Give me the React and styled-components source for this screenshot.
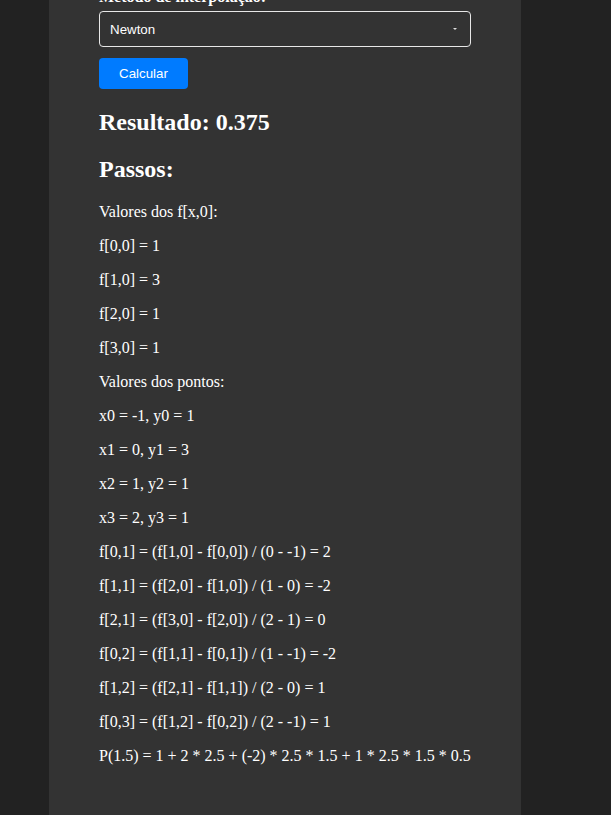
import React, { useLayoutEffect, useRef } from 'react'
import styled, { createGlobalStyle } from 'styled-components'

const GlobalStyle = createGlobalStyle`
	body {
		margin: 8px;
		background: #222;
		color: #fff;
		font-family: "Liberation Serif", "Times New Roman", serif;
	}
`

const Container = styled.div`
	width: 472px;
	box-sizing: border-box;
	margin-left: 41px;
	margin-top: -8px;
	margin-bottom: -8px;
	padding: 20px 50px 80px;
	background: #333;
`

const Title = styled.h1`
	margin: 0 0 20px;
	font-size: 28px;
`

const Label = styled.label`
	display: block;
	margin-bottom: 5px;
	font-weight: bold;
	font-size: 16px;
`

const Input = styled.input`
	display: block;
	width: 100%;
	box-sizing: border-box;
	height: 36px;
	margin-bottom: 10px;
	padding: 0 10px;
	background: #333;
	color: #fff;
	border: 1px solid #fff;
	border-radius: 4px;
	font-family: "Liberation Sans", Arial, sans-serif;
	font-size: 13.33px;
`

const SelectWrap = styled.div`
	position: relative;
	margin-bottom: 11px;
`

const Select = styled.select`
	display: block;
	width: 100%;
	height: 36px;
	box-sizing: border-box;
	padding: 0 10px;
	appearance: none;
	background: #333;
	color: #fff;
	border: 1px solid #e8e8e8;
	border-radius: 4px;
	font-family: "Liberation Sans", Arial, sans-serif;
	font-size: 13.33px;
`

const Caret = styled.span`
	position: absolute;
	right: 14px;
	top: 17px;
	width: 0;
	height: 0;
	border-left: 2.5px solid transparent;
	border-right: 2.5px solid transparent;
	border-top: 2.5px solid #ddd;
	pointer-events: none;
`

const Button = styled.button`
	display: block;
	height: 31px;
	padding: 0 20px;
	background: #007bff;
	color: #fff;
	border: none;
	border-radius: 4px;
	font-family: "Liberation Sans", Arial, sans-serif;
	font-size: 13.33px;
	cursor: pointer;
`

const Heading = styled.h2`
	font-size: 24px;
	margin: 20px 0;
`

const Step = styled.p`
	margin: 16px 0;
	font-size: 16px;
`

const steps = [
	"Valores dos f[x,0]:",
	"f[0,0] = 1",
	"f[1,0] = 3",
	"f[2,0] = 1",
	"f[3,0] = 1",
	"Valores dos pontos:",
	"x0 = -1, y0 = 1",
	"x1 = 0, y1 = 3",
	"x2 = 1, y2 = 1",
	"x3 = 2, y3 = 1",
	"f[0,1] = (f[1,0] - f[0,0]) / (0 - -1) = 2",
	"f[1,1] = (f[2,0] - f[1,0]) / (1 - 0) = -2",
	"f[2,1] = (f[3,0] - f[2,0]) / (2 - 1) = 0",
	"f[0,2] = (f[1,1] - f[0,1]) / (1 - -1) = -2",
	"f[1,2] = (f[2,1] - f[1,1]) / (2 - 0) = 1",
	"f[0,3] = (f[1,2] - f[0,2]) / (2 - -1) = 1",
	"P(1.5) = 1 + 2 * 2.5 + (-2) * 2.5 * 1.5 + 1 * 2.5 * 1.5 * 0.5",
]

export default function App() {
	const selectRef = useRef(null)

	// the screenshot shows the page scrolled down to the method select
	useLayoutEffect(() => {
		const top = selectRef.current.getBoundingClientRect().top + window.scrollY
		window.scrollTo(0, top - 11)
	}, [])

	return (
		<>
			<GlobalStyle />
			<Container>
				<Title>Interpolação Polinomial</Title>
				<Label>Pontos x:</Label>
				<Input defaultValue="-1, 0, 1, 2" />
				<Label>Pontos y:</Label>
				<Input defaultValue="1, 3, 1, 1" />
				<Label>Valor de x:</Label>
				<Input defaultValue="1.5" />
				<Label>Método de interpolação:</Label>
				<SelectWrap>
					<Select ref={selectRef} defaultValue="newton">
						<option value="lagrange">Lagrange</option>
						<option value="newton">Newton</option>
					</Select>
					<Caret />
				</SelectWrap>
				<Button>Calcular</Button>
				<Heading>Resultado: 0.375</Heading>
				<Heading>Passos:</Heading>
				{steps.map((s, i) => <Step key={i}>{s}</Step>)}
			</Container>
		</>
	)
}
